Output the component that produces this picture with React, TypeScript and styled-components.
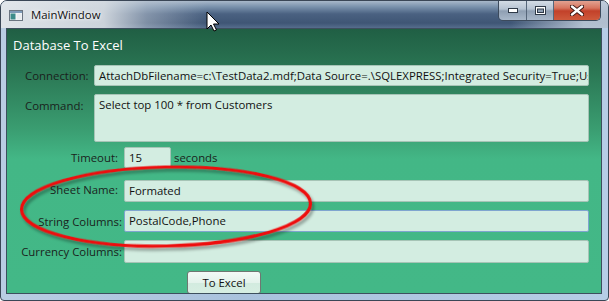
import styled, { createGlobalStyle } from 'styled-components';

const Global = createGlobalStyle`
    html, body {
        margin: 0;
        padding: 0;
        background: #ffffff;
    }
    body {
        font-family: "Open Sans", "Noto Sans", sans-serif;
    }
`;

const Window = styled.div`
    position: relative;
    width: 609px;
    height: 301px;
    box-sizing: border-box;
    border: 1px solid #3a4656;
    border-radius: 7px 7px 4px 4px;
    overflow: hidden;
    display: flex;
    flex-direction: column;
    background: linear-gradient(to right, #b9cde3 0%, #a9c2dd 40%, #b6cde6 100%);
`;

const TitleBar = styled.div`
    height: 27px;
    flex: none;
    display: flex;
    align-items: flex-start;
    background:
        linear-gradient(to right, rgba(228, 232, 236, 0.97) 0%, rgba(214, 220, 226, 0.92) 17%, rgba(190, 200, 212, 0.5) 24%, rgba(255, 255, 255, 0) 34%, rgba(255, 255, 255, 0) 84%, rgba(196, 208, 222, 0.85) 96%),
        linear-gradient(to bottom, #a8b8ca 0px, #7890ab 6px, #4a6181 13px, #3f5675 22px, #556d8d 27px);
`;

const AppIcon = styled.svg`
    margin: 9px 0 0 8px;
    flex: none;
`;

const Caption = styled.span`
    margin: 6px 0 0 8px;
    font-size: 11.4px;
    color: #111;
    text-shadow: 0 0 6px rgba(255, 255, 255, 0.9), 0 0 3px rgba(255, 255, 255, 0.9);
`;

const CaptionButtons = styled.div`
    margin-left: auto;
    margin-right: 7px;
    margin-top: -1px;
    display: flex;
    height: 20px;
    border: 1px solid #3c4a5c;
    border-top: none;
    border-radius: 0 0 5px 5px;
    overflow: hidden;
`;

const CaptionButton = styled.div<{ $close?: boolean; $w: number }>`
    width: ${p => p.$w}px;
    display: flex;
    align-items: center;
    justify-content: center;
    & + & {
        border-left: 1px solid #56667a;
    }
    background: ${p => p.$close
        ? 'linear-gradient(to bottom, #e4a898 0%, #d7755f 40%, #c2412a 55%, #cf5a3c 100%)'
        : 'linear-gradient(to bottom, #d7dfe8 0%, #b6c3d2 45%, #8f9fb3 55%, #a9b8c9 100%)'};
`;

const Frame = styled.div`
    flex: 1;
    display: flex;
    padding: 0 6px 6px 5px;
    min-height: 0;
`;

const Client = styled.div`
    flex: 1;
    border: 1px solid #3d4f5e;
    overflow: hidden;
    background: linear-gradient(to bottom, #205f44 0px, #2a7553 40px, #3a9d71 100px, #43b786 130px, #43b887 100%);
    display: flex;
    flex-direction: column;
`;

const Heading = styled.div`
    font-size: 13px;
    color: #ffffff;
    padding: 7px 0 0 6px;
    height: 25px;
`;

const TopGrid = styled.div`
    display: grid;
    grid-template-columns: 69px 1fr;
    row-gap: 8px;
    margin: 11px 12px 0 18px;
`;

const BottomGrid = styled.div`
    display: grid;
    grid-template-columns: 99px 1fr;
    row-gap: 8px;
    margin: 5px 12px 0 18px;
`;

const Label = styled.div<{ $align?: 'left' | 'right'; $pad?: number; $top?: boolean }>`
    font-size: 11.4px;
    color: #1a1f1c;
    white-space: nowrap;
    display: flex;
    align-items: ${p => (p.$top ? 'flex-start' : 'center')};
    justify-content: ${p => (p.$align === 'right' ? 'flex-end' : 'flex-start')};
    padding-right: ${p => p.$pad ?? 0}px;
    padding-top: ${p => (p.$top ? 4 : 0)}px;
`;

const TextBox = styled.div<{ $h?: number; $focused?: boolean; $w?: number; $mt?: number }>`
    box-sizing: border-box;
    height: ${p => p.$h ?? 22}px;
    width: ${p => (p.$w ? `${p.$w}px` : 'auto')};
    margin-top: ${p => p.$mt ?? 0}px;
    background: #d3ede1;
    border: 1px solid ${p => (p.$focused ? '#7fa5cf' : '#a6c4b6')};
    border-radius: 2px;
    padding: 2px 4px;
    font-size: 11.4px;
    line-height: 16px;
    color: #111;
    white-space: nowrap;
    overflow: hidden;
`;

const InlineRow = styled.div`
    display: flex;
    align-items: center;
    gap: 3px;
`;

const Suffix = styled.span`
    font-size: 11.4px;
    color: #1a1f1c;
`;

const ButtonRow = styled.div`
    grid-column: 2;
    padding-left: 63px;
`;

const Button = styled.div`
    box-sizing: border-box;
    width: 74px;
    height: 23px;
    border: 1px solid #6f7772;
    border-radius: 3px;
    background: linear-gradient(to bottom, #f3faf7 0%, #e4f3ec 50%, #d2ebdf 51%, #d6eee2 100%);
    font-size: 11.4px;
    color: #111;
    display: flex;
    align-items: center;
    justify-content: center;
`;

const Overlay = styled.svg`
    position: absolute;
    left: -1px;
    top: -1px;
    pointer-events: none;
`;

export default function App() {
    return (
        <>
            <Global />
            <Window>
                <TitleBar>
                    <AppIcon width="14" height="11" viewBox="0 0 14 11">
                        <rect x="0.5" y="0.5" width="13" height="10" fill="#f2f4f6" stroke="#6a7480" />
                        <rect x="1" y="1" width="12" height="2" fill="#7f9bb8" />
                        <rect x="1.5" y="3.5" width="5" height="6" fill="#3d8c8a" />
                        <rect x="8" y="4" width="4.5" height="5.5" fill="#e8ecef" />
                    </AppIcon>
                    <Caption>MainWindow</Caption>
                    <CaptionButtons>
                        <CaptionButton $w={27}>
                            <svg width="10" height="5" viewBox="0 0 10 5">
                                <rect x="0.5" y="0.5" width="9" height="4" fill="#fff" stroke="#2f3a48" />
                            </svg>
                        </CaptionButton>
                        <CaptionButton $w={26}>
                            <svg width="11" height="9" viewBox="0 0 11 9">
                                <rect x="0.5" y="0.5" width="10" height="8" fill="#fff" stroke="#2f3a48" />
                                <rect x="2.5" y="3" width="6" height="3.5" fill="#8e9fb3" stroke="#2f3a48" />
                            </svg>
                        </CaptionButton>
                        <CaptionButton $w={46} $close>
                            <svg width="14" height="11" viewBox="0 0 14 11">
                                <path d="M2 1.5 L12 9.5 M12 1.5 L2 9.5" stroke="#3a1410" strokeWidth="4.2" strokeLinecap="round" />
                                <path d="M2 1.5 L12 9.5 M12 1.5 L2 9.5" stroke="#ffffff" strokeWidth="2.4" strokeLinecap="round" />
                            </svg>
                        </CaptionButton>
                    </CaptionButtons>
                </TitleBar>
                <Frame>
                    <Client>
                        <Heading>Database To Excel</Heading>
                        <TopGrid>
                            <Label>Connection:</Label>
                            <TextBox $h={21}>AttachDbFilename=c:\TestData2.mdf;Data Source=.\SQLEXPRESS;Integrated Security=True;User Instance=True</TextBox>
                            <Label $top>Command:</Label>
                            <TextBox $h={48}>Select top 100 * from Customers</TextBox>
                        </TopGrid>
                        <BottomGrid>
                            <Label $align="right" $pad={6}>Timeout:</Label>
                            <InlineRow>
                                <TextBox $w={47} $h={21}>15</TextBox>
                                <Suffix>seconds</Suffix>
                            </InlineRow>
                            <Label $align="right" $pad={6}>Sheet Name:</Label>
                            <TextBox $mt={4}>Formated</TextBox>
                            <Label $align="right" $pad={2}>String Columns:</Label>
                            <TextBox $focused>PostalCode,Phone</TextBox>
                            <Label $align="right" $pad={2}>Currency Columns:</Label>
                            <TextBox $h={23}></TextBox>
                            <ButtonRow>
                                <Button>To Excel</Button>
                            </ButtonRow>
                        </BottomGrid>
                    </Client>
                </Frame>
                <Overlay width="609" height="301" viewBox="0 0 609 301">
                    <defs>
                        <filter id="sh" x="-10%" y="-30%" width="120%" height="160%">
                            <feDropShadow dx="2" dy="3" stdDeviation="1.6" floodColor="#000" floodOpacity="0.35" />
                        </filter>
                    </defs>
                    <ellipse cx="166" cy="206.5" rx="144.5" ry="39.5" fill="none" stroke="#ee1111" strokeWidth="3.2" transform="rotate(-1.2 166 206.5)" filter="url(#sh)" />
                    <path d="M207 12 L207 29 L211 25 L214 31 L216.5 30 L213.5 24 L219 24 Z" fill="#ffffff" stroke="#000000" strokeWidth="1" strokeLinejoin="round" />
                </Overlay>
            </Window>
        </>
    );
}
